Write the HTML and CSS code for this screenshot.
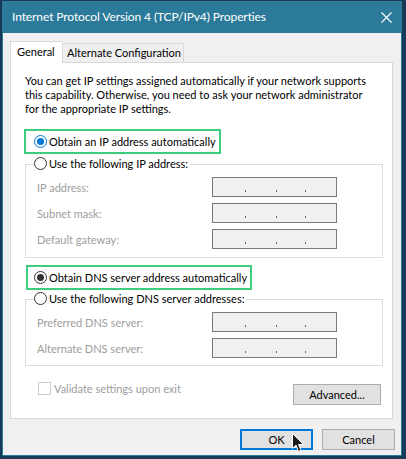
FILE: index.html
```html
<!DOCTYPE html>
<html>
<head>
<meta charset="utf-8">
<link rel="stylesheet" href="styles.css">
</head>
<body>
<div class="screen">
  <div class="window">
    <div class="titlebar">
      <span class="title">Internet Protocol Version 4 (TCP/IPv4) Properties</span>
      <svg class="close" width="11" height="11" viewBox="0 0 11 11"><path d="M0.5 0.5 L10.5 10.5 M10.5 0.5 L0.5 10.5" stroke="#fff" stroke-width="1.1" fill="none"/></svg>
    </div>
    <div class="body">
      <div class="tabs">
        <div class="tab active">General</div>
        <div class="tab alt">Alternate Configuration</div>
      </div>
      <div class="panel">
        <p class="intro">You can get IP settings assigned automatically if your network supports<br>this capability. Otherwise, you need to ask your network administrator<br>for the appropriate IP settings.</p>
        <div class="highlight hl1"><span class="radio checked focus"></span><span>Obtain an IP address automatically</span></div>
        <div class="group g1">
          <div class="legend"><span class="radio"></span><span>Use the following IP address:</span></div>
          <div class="field"><span class="lbl">IP address:</span><div class="ipbox"><i></i><i></i><i></i></div></div>
          <div class="field"><span class="lbl">Subnet mask:</span><div class="ipbox"><i></i><i></i><i></i></div></div>
          <div class="field"><span class="lbl">Default gateway:</span><div class="ipbox"><i></i><i></i><i></i></div></div>
        </div>
        <div class="highlight hl2"><span class="radio checked dark"></span><span>Obtain DNS server address automatically</span></div>
        <div class="group g2">
          <div class="legend"><span class="radio"></span><span>Use the following DNS server addresses:</span></div>
          <div class="field"><span class="lbl">Preferred DNS server:</span><div class="ipbox"><i></i><i></i><i></i></div></div>
          <div class="field"><span class="lbl">Alternate DNS server:</span><div class="ipbox"><i></i><i></i><i></i></div></div>
        </div>
        <div class="bottomrow">
          <div class="check"><span class="box"></span><span>Validate settings upon exit</span></div>
          <div class="btn adv">Advanced...</div>
        </div>
      </div>
      <div class="actions">
        <div class="btn ok">OK</div>
        <div class="btn cancel">Cancel</div>
        <svg class="cursor" width="13" height="20" viewBox="0 0 13 20"><path d="M0.5 0.5 L0.5 15.5 L4 12 L6.5 18.5 L9 17.5 L6.5 11.5 L11.5 11.5 Z" fill="#1a1a1a" stroke="#fff" stroke-width="1"/></svg>
      </div>
    </div>
  </div>
</div>
</body>
</html>
```
FILE: styles.css
```css
* { box-sizing: border-box; }
html, body { margin: 0; padding: 0; }
body {
  width: 406px;
  height: 459px;
  background: #163a58;
  font-family: Lato, "Noto Sans", sans-serif;
  font-size: 11px;
  color: #000;
  overflow: hidden;
}
.screen {
  padding: 1px 4px 3px 2px;
}
.window {
  width: 400px;
  height: 455px;
  border: 1px solid #2b7a9a;
  background: #f0f0f0;
  display: flex;
  flex-direction: column;
}
.titlebar {
  height: 31px;
  background: #2b7a9a;
  display: flex;
  align-items: center;
  justify-content: space-between;
  padding: 0 9px 2px 9px;
  flex: none;
}
.title {
  color: #fff;
  font-size: 12px;
  letter-spacing: -0.1px;
}
.close { display: block; margin-top: 1px; }
.body {
  flex: 1;
  padding: 7px 6px 0 7px;
  position: relative;
}
.tabs {
  display: flex;
  align-items: flex-end;
  height: 22px;
}
.tab {
  border: 1px solid #d9d9d9;
  border-bottom: none;
  background: #f0f0f0;
  height: 19px;
  line-height: 18px;
  white-space: nowrap;
}
.tab.alt {
  width: 122px;
  padding-left: 4px;
}
.tab.active {
  background: #fff;
  height: 22px;
  width: 52px;
  padding-left: 6px;
  line-height: 20px;
  position: relative;
  z-index: 1;
  margin-bottom: -1px;
  border-right: none;
}
.panel {
  background: #fff;
  border: 1px solid #d9d9d9;
  height: 357px;
  width: 383px;
}
.intro {
  margin: 11px 0 0 14px;
  line-height: 14px;
  white-space: nowrap;
}
.highlight {
  display: flex;
  align-items: center;
  border: 2px solid #3dcd7f;
  height: 25px;
  padding-left: 8px;
  white-space: nowrap;
}
.hl1 { margin: 13px 0 0 13px; width: 197px; }
.hl2 { margin: 7px 0 0 15px; width: 226px; padding-left: 6px; }
.radio {
  width: 13px;
  height: 13px;
  border: 1px solid #333;
  border-radius: 50%;
  background: #fff;
  margin-right: 2px;
  position: relative;
  flex: none;
}
.radio.checked::after {
  content: "";
  position: absolute;
  left: 2px; top: 2px;
  width: 7px; height: 7px;
  border-radius: 50%;
  background: #333;
}
.radio.focus { border-color: #0078d7; }
.radio.focus::after { background: #0078d7; }
.group {
  border: 1px solid #dcdcdc;
  margin-left: 14px;
  width: 358px;
  padding: 0 0 7px 11px;
}
.g1 { margin-top: 10px; padding-bottom: 8px; }
.g2 { margin-top: 9px; }
.legend {
  display: flex;
  align-items: center;
  height: 14px;
  margin: -9px 0 0 -3px;
  background: #fff;
  width: max-content;
  padding-right: 2px;
  white-space: nowrap;
}
.field {
  display: flex;
  align-items: center;
  height: 20px;
  margin-top: 6px;
}
.legend + .field { margin-top: 7px; }
.lbl {
  width: 175px;
  color: #9d9d9d;
}
.ipbox {
  width: 125px;
  height: 20px;
  border: 1px solid #7a7a7a;
  background: #f0f0f0;
  position: relative;
}
.ipbox i {
  position: absolute;
  top: 12px;
  width: 1px;
  height: 2px;
  background: #6a6a6a;
}
.ipbox i:nth-child(1) { left: 32px; }
.ipbox i:nth-child(2) { left: 63px; }
.ipbox i:nth-child(3) { left: 92px; }
.bottomrow {
  display: flex;
  justify-content: space-between;
  align-items: flex-start;
  margin: 18px 11px 0 27px;
}
.check {
  display: flex;
  align-items: center;
  color: #9d9d9d;
  margin-top: -2px;
}
.check .box {
  width: 13px;
  height: 13px;
  border: 1px solid #cccccc;
  background: #fff;
  margin-right: 3px;
}
.btn {
  height: 21px;
  background: #e1e1e1;
  border: 1px solid #adadad;
  display: flex;
  align-items: center;
  justify-content: center;
}
.adv { width: 88px; }
.actions {
  display: flex;
  justify-content: flex-end;
  gap: 9px;
  margin-top: 10px;
  padding-right: 0;
  position: relative;
}
.ok, .cancel { width: 73px; }
.ok { border: 2px solid #0078d7; }
.cursor {
  position: absolute;
  left: 282px;
  top: 4px;
}
```
